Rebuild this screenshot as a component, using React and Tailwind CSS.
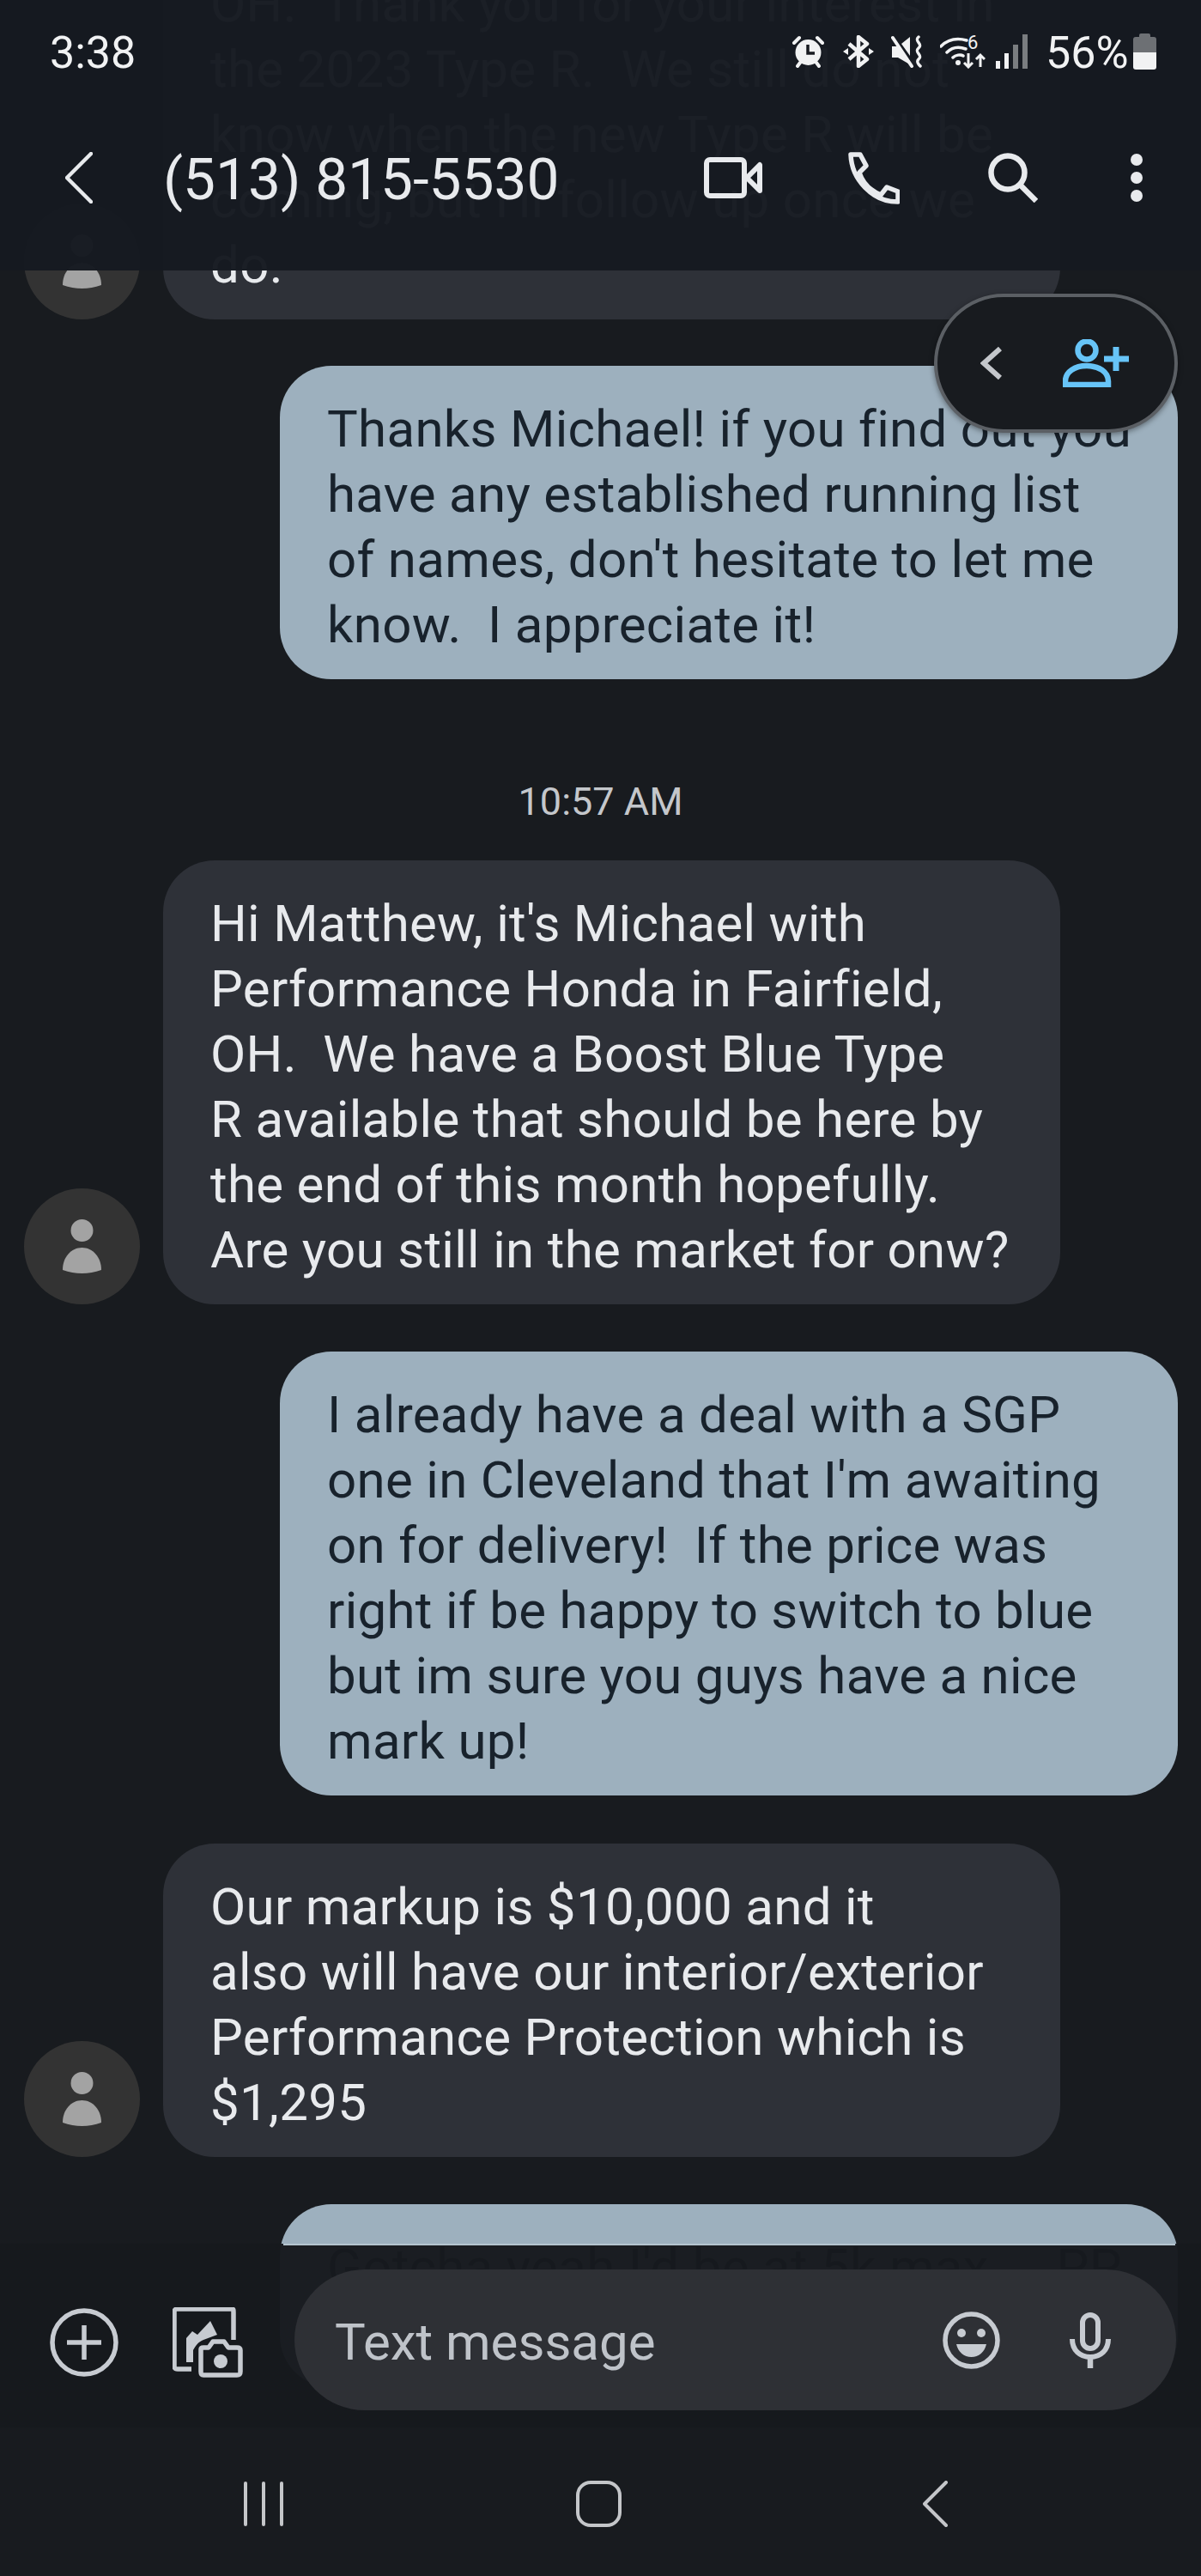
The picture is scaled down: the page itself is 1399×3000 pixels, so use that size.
const F = "font-['Roboto',sans-serif]";

function Lines({ lines }) {
  return lines.map((l, i) => (
    <div key={i} className="h-[76px] whitespace-pre">{l}</div>
  ));
}

function Avatar() {
  return (
    <div className="w-[135px] h-[135px] rounded-full bg-[#333333] shrink-0">
      <svg viewBox="0 0 135 135" className="w-[135px] h-[135px]">
        <circle cx="67.5" cy="49" r="13" fill="#a3a3a3" />
        <path d="M45 95C45 80 55 69 67.5 69C80 69 90 80 90 95Q67.5 103 45 95Z" fill="#a3a3a3" />
      </svg>
    </div>
  );
}

function Received({ lines, mt }) {
  return (
    <div className={`flex items-end pl-[28px] ${mt}`}>
      <Avatar />
      <div className="ml-[27px] w-[1045px] rounded-[60px] bg-[#2e3138] pl-[55px] pt-[36px] pb-[25px] text-[#e8eaed] text-[60px] leading-[76px] tracking-[0.3px]">
        <Lines lines={lines} />
      </div>
    </div>
  );
}

function Sent({ lines, mt }) {
  return (
    <div className={`self-end mr-[27px] w-[1046px] rounded-[60px] bg-[#9db0be] pl-[55px] pt-[36px] pb-[25px] text-[#18222c] text-[60px] leading-[76px] tracking-[0.3px] ${mt}`}>
      <Lines lines={lines} />
    </div>
  );
}

function StatusIcons() {
  return (
    <div className="flex items-center">
      <svg width="39" height="38" viewBox="0 0 39 38" className="shrink-0">
        <circle cx="19.5" cy="20" r="15" fill="#f1f2f3" />
        <path d="M19 11V21H27" fill="none" stroke="#171a20" strokeWidth="3.5" />
        <path d="M3 9L9 3M36 9L30 3M7 36L10 32M32 36L29 32" stroke="#f1f2f3" strokeWidth="4" strokeLinecap="round" />
      </svg>
      <svg width="36" height="38" viewBox="0 0 36 38" className="ml-[21px] shrink-0">
        <path d="M7 10L28 28L18 36V2L28 10L7 28" fill="none" stroke="#f1f2f3" strokeWidth="4.5" strokeLinejoin="round" />
        <path d="M0 19L6 15V23ZM36 19L30 15V23Z" fill="#f1f2f3" />
      </svg>
      <svg width="40" height="38" viewBox="0 0 40 38" className="ml-[20px] shrink-0">
        <path d="M2 3L24 36" stroke="#f1f2f3" strokeWidth="4" strokeLinecap="round" />
        <path d="M1 13H7L22 30V33H20L8 26H1ZM12 10L22 2V24Z" fill="#f1f2f3" />
        <path d="M32 2C26 7 38 10 32 15C26 20 38 23 32 28C29 31 32 34 34 36" fill="none" stroke="#f1f2f3" strokeWidth="3.5" strokeLinecap="round" />
      </svg>
      <svg width="53" height="40" viewBox="0 0 53 40" className="ml-[17px] shrink-0">
        <path d="M1 14C9 6 20 4 31 7M8 21C14 15 22 14 30 17M15 27C18 24 24 23 27 25" fill="none" stroke="#f1f2f3" strokeWidth="3.5" strokeLinecap="round" />
        <circle cx="21" cy="33" r="3" fill="#f1f2f3" />
        <text x="32" y="17" fontSize="22" fill="#f1f2f3" fontFamily="Roboto">6</text>
        <path d="M33 22V38M28 33L33 38L38 33M47 38V24M42 29L47 24L52 29" fill="none" stroke="#f1f2f3" strokeWidth="3" />
      </svg>
      <svg width="37" height="40" viewBox="0 0 37 40" className="ml-[12px] shrink-0">
        <rect x="0" y="31" width="5" height="9" fill="#f1f2f3" />
        <rect x="10" y="22" width="5" height="18" fill="#f1f2f3" />
        <rect x="20" y="12" width="6" height="28" fill="#7a7d80" />
        <rect x="31" y="0" width="6" height="40" fill="#7a7d80" />
      </svg>
      <span className="ml-[21px] w-[94px] text-[52px] leading-[52px] text-[#f1f2f3] translate-y-[2px]">56%</span>
      <div className="ml-[8px] w-[27px] h-[42px] flex flex-col items-center">
        <div className="w-[13px] h-[4px] bg-[#6d7074] rounded-t-[2px]" />
        <div className="w-[27px] h-[18px] bg-[#6d7074] rounded-t-[3px]" />
        <div className="w-[27px] h-[20px] bg-[#f1f2f3] rounded-b-[3px]" />
      </div>
    </div>
  );
}

function Header() {
  return (
    <div className={`absolute top-0 left-0 w-full h-[315px] bg-[#161a21]/[.975] ${F}`}>
      <div className="flex items-center justify-between pl-[58px] pr-[52px] pt-[36px] h-[84px]">
        <span className="text-[52px] leading-[52px] text-[#f1f2f3] translate-y-[2px]">3:38</span>
        <StatusIcons />
      </div>
      <div className="flex items-center mt-[93px] h-[60px] pl-[76px] pr-[68px]">
        <svg width="32" height="60" viewBox="0 0 32 60" className="shrink-0">
          <path d="M30 2L2 30L30 58" fill="none" stroke="#e8eaed" strokeWidth="4.5" strokeLinecap="round" strokeLinejoin="round" />
        </svg>
        <span className="ml-[82px] text-[67.5px] leading-[76px] text-[#e8eaed] whitespace-pre translate-y-[2px]">(513) 815-5530</span>
        <svg width="68" height="48" viewBox="0 0 68 48" className="ml-auto shrink-0">
          <rect x="3" y="3" width="44" height="42" rx="4" fill="none" stroke="#e8eaed" strokeWidth="6" />
          <path d="M50 24L65 9V39Z" fill="none" stroke="#e8eaed" strokeWidth="6" strokeLinejoin="round" />
        </svg>
        <svg width="60" height="61" viewBox="0 0 60 61" className="ml-[100px] shrink-0">
          <path d="M3 3H14L21 16L13 24C17 36 26 45 38 50L45 41L58 46V58C28 58 4 32 3 3Z" fill="none" stroke="#e8eaed" strokeWidth="5.5" strokeLinejoin="round" />
        </svg>
        <svg width="58" height="58" viewBox="0 0 58 58" className="ml-[103px] shrink-0">
          <circle cx="23" cy="23" r="19.5" fill="none" stroke="#e8eaed" strokeWidth="6.5" />
          <path d="M37 37L56 56" stroke="#e8eaed" strokeWidth="6.5" />
        </svg>
        <div className="ml-[108px] flex flex-col gap-[7px] shrink-0">
          <div className="w-[14px] h-[14px] rounded-full bg-[#e8eaed]" />
          <div className="w-[14px] h-[14px] rounded-full bg-[#e8eaed]" />
          <div className="w-[14px] h-[14px] rounded-full bg-[#e8eaed]" />
        </div>
      </div>
    </div>
  );
}

function ContactPill() {
  return (
    <div className="absolute top-[342px] left-[1088px] w-[284px] h-[162px] rounded-[81px] border-[4px] border-[#5b5f64] bg-[#181b1f] flex items-center shadow-[0_2px_6px_rgba(0,0,0,0.4)]">
      <svg width="26" height="40" viewBox="0 0 26 40" className="ml-[50px] shrink-0">
        <path d="M23 3L4 20L23 37" fill="none" stroke="#c4c7cb" strokeWidth="6" />
      </svg>
      <svg width="78" height="56" viewBox="0 0 78 56" className="ml-[70px] shrink-0">
        <circle cx="28" cy="13" r="10.5" fill="none" stroke="#67c4f7" strokeWidth="6.5" />
        <path d="M3 53V49C3 38 14 31 28 31C42 31 53 38 53 49V53Z" fill="none" stroke="#67c4f7" strokeWidth="6.5" />
        <path d="M62 9V37M48 23H77" stroke="#67c4f7" strokeWidth="7" />
      </svg>
    </div>
  );
}

function Footer() {
  return (
    <div className={`absolute top-[2613px] left-0 w-full ${F}`}>
      <div className="h-[214px] bg-[#171a1e]/[.975]">
        <div className="ml-[330px] w-[1039px] h-[2px] bg-[#b5c4cf]" />
        <div className="flex items-center pt-[28px] pl-[58px]">
          <svg width="80" height="80" viewBox="0 0 80 80" className="shrink-0 mt-[6px]">
            <circle cx="40" cy="40" r="37" fill="none" stroke="#c7cbd1" strokeWidth="5.5" />
            <path d="M40 20V60M20 40H60" stroke="#c7cbd1" strokeWidth="5.5" />
          </svg>
          <svg width="82" height="82" viewBox="0 0 82 82" className="ml-[63px] shrink-0 mt-[6px]">
            <path d="M22 72H6C3 72 2 71 2 68V6C2 3 3 2 6 2H69C71 2 71 3 71 6V38" fill="none" stroke="#c7cbd1" strokeWidth="5.5" />
            <path d="M16 64V36L23 28L29 32L44 16L52 32L36 38C30 40 26 46 24 50V64Z" fill="#c7cbd1" />
            <path d="M33 49C33 47 34 47 36 47H42L47 40H60L65 47H75C78 47 79 48 79 50V75C79 78 78 79 75 79H36C34 79 33 78 33 75Z" fill="#171a1e" stroke="#c7cbd1" strokeWidth="5.5" strokeLinejoin="round" />
            <circle cx="56" cy="63" r="8" fill="#c7cbd1" />
          </svg>
          <div className="ml-[60px] w-[1027px] h-[164px] rounded-[82px] bg-[#2e3035] flex items-center pl-[47px] pr-[76px]">
            <span className="text-[60px] leading-[76px] text-[#bfc3c9] translate-y-[3px]">Text message</span>
            <svg width="67" height="67" viewBox="0 0 67 67" className="ml-auto shrink-0">
              <circle cx="33.5" cy="33.5" r="30.5" fill="none" stroke="#c7cbd1" strokeWidth="5.5" />
              <circle cx="22" cy="25" r="5" fill="#c7cbd1" />
              <circle cx="45" cy="25" r="5" fill="#c7cbd1" />
              <path d="M16 38H51C49 47 42 53 33.5 53C25 53 18 47 16 38Z" fill="#c7cbd1" />
            </svg>
            <svg width="48" height="65" viewBox="0 0 48 65" className="ml-[81px] shrink-0">
              <rect x="15" y="3" width="18" height="39" rx="9" fill="none" stroke="#c7cbd1" strokeWidth="6" />
              <path d="M3 31C3 44 12 52 24 52C36 52 45 44 45 31" fill="none" stroke="#c7cbd1" strokeWidth="6" />
              <path d="M24 52V65" stroke="#c7cbd1" strokeWidth="6.5" />
            </svg>
          </div>
        </div>
      </div>
      <div className="h-[173px] bg-[#181b1f] flex items-center pl-[284px]">
        <div className="flex gap-[17px] shrink-0 mt-[4px]">
          <div className="w-[4px] h-[52px] rounded-full bg-[#c4c6c9]" />
          <div className="w-[4px] h-[52px] rounded-full bg-[#c4c6c9]" />
          <div className="w-[4px] h-[52px] rounded-full bg-[#c4c6c9]" />
        </div>
        <div className="ml-[341px] w-[53px] h-[54px] rounded-[17px] border-[4px] border-[#c4c6c9] shrink-0 mt-[4px]" />
        <svg width="29" height="54" viewBox="0 0 29 54" className="ml-[351px] shrink-0 mt-[4px]">
          <path d="M27 2L2 27L27 52" fill="none" stroke="#c4c6c9" strokeWidth="4" strokeLinecap="round" strokeLinejoin="round" />
        </svg>
      </div>
    </div>
  );
}

export default function App() {
  return (
    <div className={`relative w-[1399px] h-[3000px] overflow-hidden bg-[#181b1f] ${F}`}>
      <div className="flex flex-col -mt-[69px]">
        <Received
          mt=""
          lines={[
            "OH.  Thank you for your interest in",
            "the 2023 Type R.  We still do not",
            "know when the new Type R will be",
            "coming, but I'll follow up once we",
            "do.",
          ]}
        />
        <Sent
          mt="mt-[54px]"
          lines={[
            "Thanks Michael! if you find out you",
            "have any established running list",
            "of names, don't hesitate to let me",
            "know.  I appreciate it!",
          ]}
        />
        <div className="mt-[113px] mb-[38px] h-[60px] text-center text-[45px] leading-[60px] text-[#c4c7cb]">10:57 AM</div>
        <Received
          mt=""
          lines={[
            "Hi Matthew, it's Michael with",
            "Performance Honda in Fairfield,",
            "OH.  We have a Boost Blue Type",
            "R available that should be here by",
            "the end of this month hopefully.",
            "Are you still in the market for onw?",
          ]}
        />
        <Sent
          mt="mt-[55px]"
          lines={[
            "I already have a deal with a SGP",
            "one in Cleveland that I'm awaiting",
            "on for delivery!  If the price was",
            "right if be happy to switch to blue",
            "but im sure you guys have a nice",
            "mark up!",
          ]}
        />
        <Received
          mt="mt-[56px]"
          lines={[
            "Our markup is $10,000 and it",
            "also will have our interior/exterior",
            "Performance Protection which is",
            "$1,295",
          ]}
        />
        <Sent
          mt="mt-[55px]"
          lines={["Gotcha yeah I'd be at 5k max...  PP", "Thanks for letting me know!"]}
        />
      </div>
      <Header />
      <ContactPill />
      <Footer />
    </div>
  );
}
